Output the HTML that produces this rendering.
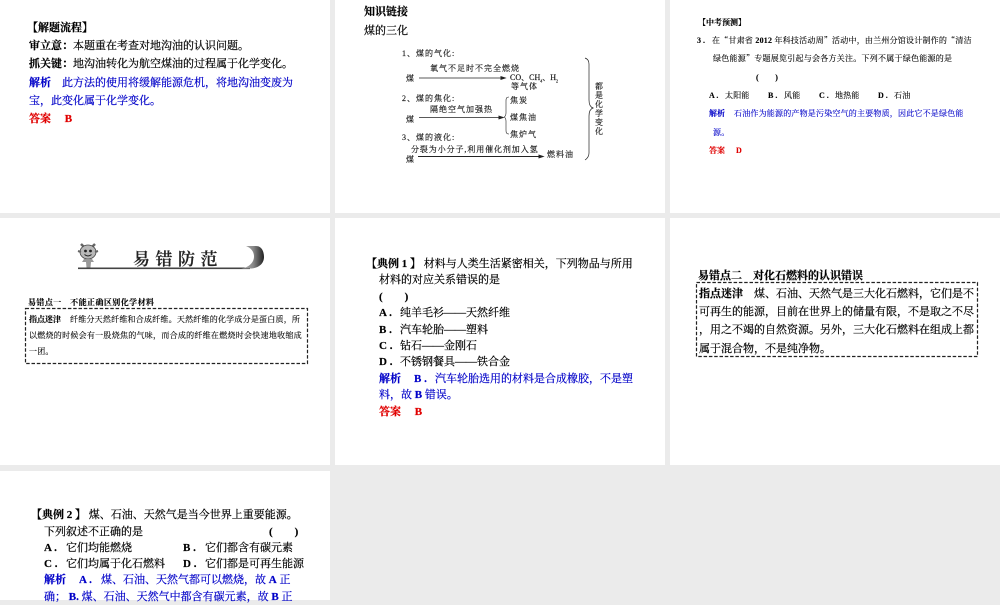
<!DOCTYPE html>
<html lang="zh"><head><meta charset="utf-8"><style>
html,body{margin:0;padding:0}
body{width:1000px;height:600px;overflow:hidden;background:#ebebeb;position:relative}
#w{position:absolute;left:0;top:0;width:1000px;height:600px;filter:blur(.35px)}
.p{position:absolute;background:#fff}
.l{position:absolute;margin-top:1px;white-space:pre;font-family:"Liberation Serif","Noto Serif CJK SC",serif;font-size:11px;line-height:16px;height:16px;color:#000;-webkit-text-stroke:.2px currentColor}
.b{font-weight:700}.bl{color:#0000c8}.r{color:#e00000}
.s{font-size:8px;letter-spacing:.2px;-webkit-text-stroke:.12px currentColor}
.d{font-size:8px;letter-spacing:1px;color:#111;-webkit-text-stroke:.15px currentColor}
.o{display:inline-block;width:21px;font-weight:700;font-family:"Liberation Serif",serif}
.s .o{width:16px;letter-spacing:0}
.q{font-family:"Noto Serif CJK SC",serif}
</style></head><body><div id="w">
<div class="p" style="left:0;top:0;width:330px;height:213px"></div>
<div class="p" style="left:335px;top:0;width:330px;height:213px"></div>
<div class="p" style="left:670px;top:0;width:330px;height:213px"></div>
<div class="p" style="left:0;top:218px;width:330px;height:247px"></div>
<div class="p" style="left:335px;top:218px;width:330px;height:247px"></div>
<div class="p" style="left:670px;top:218px;width:330px;height:247px"></div>
<div class="p" style="left:0;top:471px;width:330px;height:129px"></div>

<div class="l b" style="left:27px;top:19px">【解题流程】</div>
<div class="l" style="left:29px;top:37px"><b>审立意：</b>本题重在考查对地沟油的认识问题。</div>
<div class="l" style="left:29px;top:55px"><b>抓关键：</b>地沟油转化为航空煤油的过程属于化学变化。</div>
<div class="l bl" style="left:29px;top:74px"><b>解析</b>　此方法的使用将缓解能源危机，将地沟油变废为</div>
<div class="l bl" style="left:29px;top:92px">宝，此变化属于化学变化。</div>
<div class="l r b" style="left:29px;top:110px">答案　 B</div>

<div class="l b" style="left:364px;top:3px">知识链接</div>
<div class="l" style="left:364px;top:22px">煤的三化</div>
<div class="l d" style="left:402px;top:45px">1、煤的气化:</div>
<div class="l d" style="left:430px;top:60px">氧气不足时不完全燃烧</div>
<div class="l d" style="left:406px;top:70px">煤</div>
<div class="l d" style="left:510px;top:69px;letter-spacing:0">CO、CH<sub style="font-size:4px;line-height:0">4</sub>、H<sub style="font-size:4px;line-height:0">2</sub></div>
<div class="l d" style="left:511px;top:78px">等气体</div>
<div class="l d" style="left:402px;top:90px">2、煤的焦化:</div>
<div class="l d" style="left:430px;top:101px">隔绝空气加强热</div>
<div class="l d" style="left:406px;top:111px">煤</div>
<div class="l d" style="left:510px;top:92px">焦炭</div>
<div class="l d" style="left:510px;top:109px">煤焦油</div>
<div class="l d" style="left:510px;top:126px">焦炉气</div>
<div class="l d" style="left:402px;top:129px">3、煤的液化:</div>
<div class="l d" style="left:411px;top:141px;letter-spacing:.9px">分裂为小分子,利用催化剂加入氢</div>
<div class="l d" style="left:406px;top:151px">煤</div>
<div class="l d" style="left:547px;top:146px">燃料油</div>
<div class="l d" style="left:595px;top:82px;width:9px;height:54px;white-space:normal;line-height:8.9px;letter-spacing:0">都是化学变化</div>
<svg style="position:absolute;left:0;top:0" width="1000" height="600" fill="none" stroke="#222">
<path d="M419 78H504" stroke-width=".8"/><path d="M505 78l-4-1.300v2.600z" fill="#222"/>
<path d="M419 117.500H502" stroke-width=".8"/><path d="M503 117.500l-4-1.300v2.600z" fill="#222"/>
<path d="M418 156.500H542" stroke-width="1"/><path d="M543 156.500l-4-1.300v2.600z" fill="#222"/>
<path d="M509 97c-3 0-3 2-3 4v12c0 2-1 4-2 4 1 0 2 2 2 4v9c0 2 0 4 3 4" stroke-width=".6"/>
<path d="M585 58c3 1 4 3 4 6v36c0 4 1 7 4 8-3 1-4 4-4 8v37c0 3-1 5-4 7" stroke-width=".7"/>
<rect x="25.500" y="308.500" width="282" height="55" stroke-dasharray="3.500 1.800" stroke-width="1.200"/>
<rect x="696.500" y="282.500" width="281" height="74" stroke-dasharray="3.500 1.800" stroke-width="1.200"/>
</svg>

<div class="l b s" style="left:698px;top:14px;letter-spacing:0">【中考预测】</div>
<div class="l s" style="left:697px;top:32px;letter-spacing:.22px"><b class="o" style="width:15px">3 .</b>在<span class="q">“</span>甘肃省 <b>2012</b> 年科技活动周<span class="q">”</span>活动中，由兰州分馆设计制作的<span class="q">“</span>清洁</div>
<div class="l s" style="left:713px;top:50px;letter-spacing:.25px">绿色能源<span class="q">”</span>专题展览引起与会各方关注。下列不属于绿色能源的是</div>
<div class="l s b" style="left:756px;top:69px">(　　)</div>
<div class="l s" style="left:709px;top:87px"><b class="o">A .</b>太阳能</div>
<div class="l s" style="left:768px;top:87px"><b class="o">B .</b>风能</div>
<div class="l s" style="left:819px;top:87px"><b class="o">C .</b>地热能</div>
<div class="l s" style="left:878px;top:87px"><b class="o">D .</b>石油</div>
<div class="l s bl b" style="left:709px;top:105px;letter-spacing:0">解析</div>
<div class="l s bl" style="left:734px;top:105px">石油作为能源的产物是污染空气的主要物质，因此它不是绿色能</div>
<div class="l s bl" style="left:713px;top:124px">源。</div>
<div class="l s r b" style="left:709px;top:142px;letter-spacing:0">答案</div>
<div class="l s r b" style="left:736px;top:142px">D</div>

<div class="l" style="left:133px;top:249px;font-size:17px;line-height:20px;height:20px;letter-spacing:5.5px;color:#222;font-weight:600">易错防范</div>
<svg style="position:absolute;left:75px;top:240px" width="195" height="32" fill="none">
<defs><linearGradient id="g" x1="0" x2="1" y1="0" y2="0"><stop offset="0" stop-color="#bbb"/><stop offset=".55" stop-color="#888"/><stop offset="1" stop-color="#222"/></linearGradient></defs>
<rect x="3" y="27.500" width="172" height="1.600" fill="#444"/>
<path d="M171 6h10c6 0 8 6 8 11 0 7-6 11.500-14 11.500h-10c7 0 14-5 14-12 0-5-3-8.500-8-10.500z" fill="url(#g)"/>
<path d="M6 4l4 4M20 4l-4 4" stroke="#666" stroke-width="2.500"/>
<ellipse cx="13" cy="12" rx="8" ry="7" fill="#b8b8b8" stroke="#444" stroke-width=".8"/>
<path d="M3 11l3 1M23 11l-3 1" stroke="#666" stroke-width="2"/>
<circle cx="10.500" cy="11" r="1.400" fill="#222"/><circle cx="15.500" cy="11" r="1.400" fill="#222"/>
<path d="M9.500 14.500q3.500 3 7 0" stroke="#222"/>
<path d="M9 19h8l2 3h-3l-.5 5.500h-4L11 22H7z" fill="#999"/>
</svg>
<div class="l b s" style="left:28px;top:294px;letter-spacing:.43px">易错点一　不能正确区别化学材料</div>
<div class="l s" style="left:29px;top:311px;letter-spacing:0"><b>指点迷津</b></div>
<div class="l s" style="left:70px;top:311px;letter-spacing:.22px">纤维分天然纤维和合成纤维。天然纤维的化学成分是蛋白质，所</div>
<div class="l s" style="left:29px;top:327px;letter-spacing:.27px">以燃烧的时候会有一股烧焦的气味，而合成的纤维在燃烧时会快速地收缩成</div>
<div class="l s" style="left:29px;top:343px;letter-spacing:.2px">一团。</div>

<div class="l" style="left:366px;top:255px"><b>【典例 1 】</b> 材料与人类生活紧密相关，下列物品与所用</div>
<div class="l" style="left:379px;top:271px">材料的对应关系错误的是</div>
<div class="l b" style="left:379px;top:288px">(　　)</div>
<div class="l" style="left:379px;top:304px"><b class="o">A .</b>纯羊毛衫——天然纤维</div>
<div class="l" style="left:379px;top:321px"><b class="o">B .</b>汽车轮胎——塑料</div>
<div class="l" style="left:379px;top:337px"><b class="o">C .</b>钻石——金刚石</div>
<div class="l" style="left:379px;top:353px"><b class="o">D .</b>不锈钢餐具——铁合金</div>
<div class="l bl" style="left:379px;top:370px"><b>解析</b>　<b class="o" style="margin-left:2px">B .</b>汽车轮胎选用的材料是合成橡胶，不是塑</div>
<div class="l bl" style="left:379px;top:386px">料，故 <b>B</b> 错误。</div>
<div class="l r b" style="left:379px;top:403px">答案　 B</div>

<div class="l b" style="left:698px;top:267px">易错点二　对化石燃料的认识错误</div>
<div class="l" style="left:699px;top:285px"><b>指点迷津</b>　煤、石油、天然气是三大化石燃料，它们是不</div>
<div class="l" style="left:699px;top:303px">可再生的能源，目前在世界上的储量有限，不是取之不尽</div>
<div class="l" style="left:699px;top:321px">，用之不竭的自然资源。另外，三大化石燃料在组成上都</div>
<div class="l" style="left:699px;top:340px">属于混合物，不是纯净物。</div>

<div class="l" style="left:31px;top:506px"><b>【典例 2 】</b> 煤、石油、天然气是当今世界上重要能源。</div>
<div class="l" style="left:44px;top:523px">下列叙述不正确的是</div>
<div class="l b" style="left:269px;top:523px">(　　)</div>
<div class="l" style="left:44px;top:539px"><b class="o" style="width:22px">A .</b>它们均能燃烧</div>
<div class="l" style="left:183px;top:539px"><b class="o" style="width:22px">B .</b>它们都含有碳元素</div>
<div class="l" style="left:44px;top:555px"><b class="o" style="width:22px">C .</b>它们均属于化石燃料</div>
<div class="l" style="left:183px;top:555px"><b class="o" style="width:22px">D .</b>它们都是可再生能源</div>
<div class="l bl" style="left:44px;top:571px"><b>解析</b>　<b class="o" style="margin-left:2px;width:22px">A .</b>煤、石油、天然气都可以燃烧，故 <b>A</b> 正</div>
<div class="l bl" style="left:44px;top:588px">确； <b>B.</b> 煤、石油、天然气中都含有碳元素，故 <b>B</b> 正</div>
</div></body></html>
